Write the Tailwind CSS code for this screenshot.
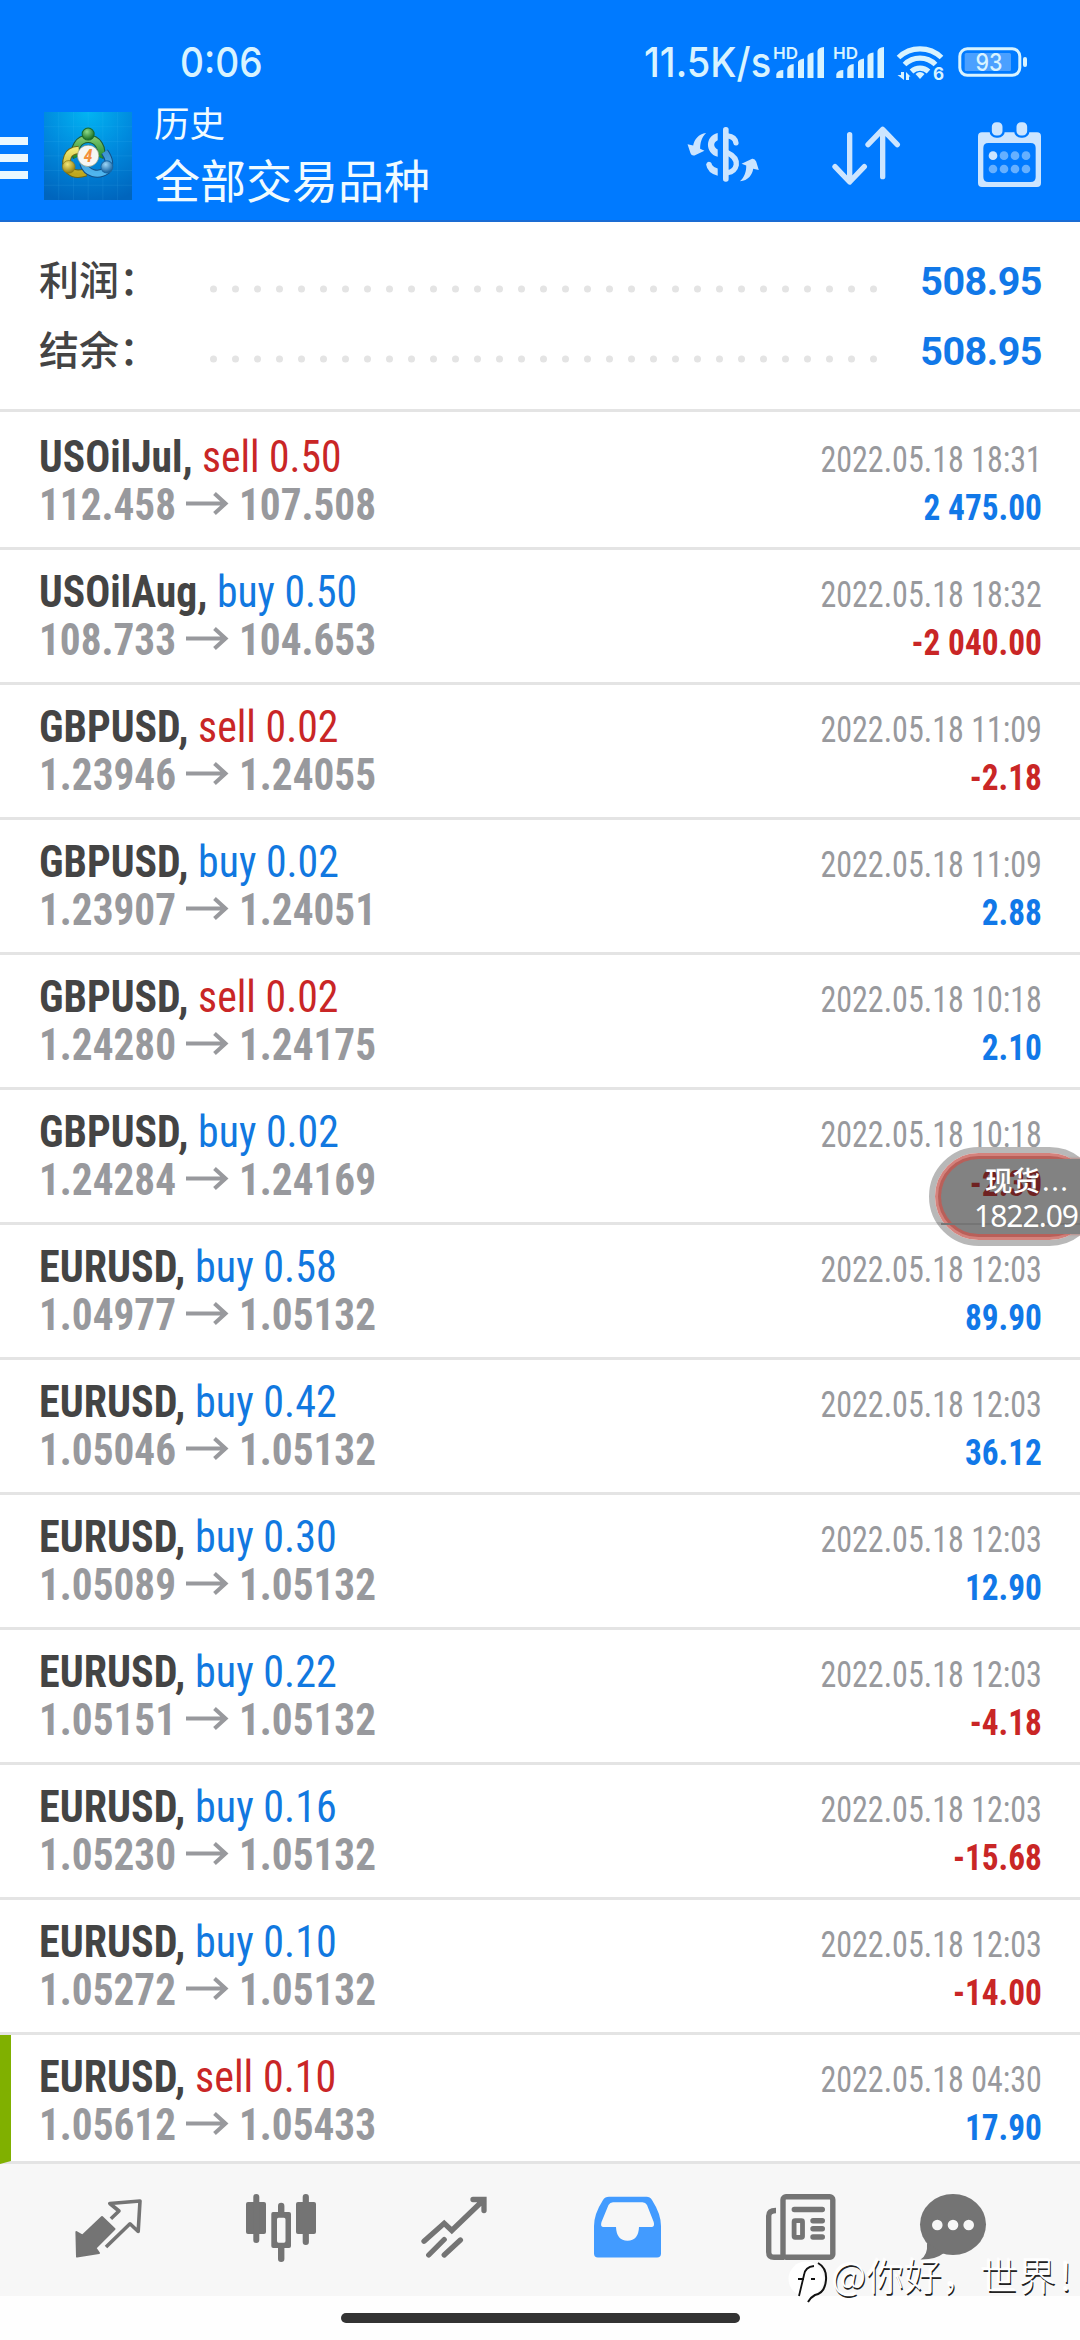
<!DOCTYPE html>
<html lang="zh-CN">
<head>
<meta charset="utf-8">
<title>历史</title>
<script src="https://cdn.jsdelivr.net/npm/@tailwindcss/browser@4"></script>
</head>
<body class="bg-white">
<div class="relative w-[1080px] h-[2340px] overflow-hidden flex flex-col bg-white font-['Roboto','Noto_Sans_CJK_SC',sans-serif]">

  <header class="h-[222px] shrink-0 bg-[#007aff] border-b-2 border-[#1a6cd4] flex flex-col">
    <div class="h-[100px] flex items-start font-['Inter',sans-serif] text-[41px] leading-[50px] font-medium text-[#d8f3ff]">
      <div class="w-[641px] pl-[180px] pt-[37px]"><span class="inline-block origin-left scale-x-[.905]">0:06</span></div>
      <div class="w-[129px] pt-[37px] pl-[3px] whitespace-nowrap"><span class="inline-block origin-left scale-x-[.93]">11.5K/s</span></div>
      <svg class="mt-[40px] w-[262px] h-[44px]" viewBox="770 40 262 44" fill="#d8f3ff">
        <g id="sig">
          <text x="773" y="58.5" font-size="16.5" font-weight="600" textLength="25" lengthAdjust="spacingAndGlyphs">HD</text>
          <path d="M776.3 78V74Q778 70 783.3 70V78ZM787.3 78V69Q788 64.500 793.700 64V78ZM798 78V62Q799 59 804 58.500V78ZM807.500 78V56Q808 53 813.500 52.500V78ZM817.500 78V51Q818 47.500 824 47V78Z"/>
        </g>
        <use href="#sig" x="60"/>
        <g fill="none" stroke="#d8f3ff" stroke-width="5.200">
          <path d="M898.500 57.500A31 31 0 0 1 941.500 57.500"/>
          <path d="M904.500 64.500A22 22 0 0 1 935.500 64.500"/>
          <path d="M911.500 71.500A12.500 12.500 0 0 1 928.500 71.500"/>
        </g>
        <path d="M915.500 74Q920 70 924.500 74L920 79Z"/>
        <path d="M901 72H904V80L897.500 75H901ZM906 80V72L910.500 76.500H909V80Z"/>
        <text x="933" y="80" font-size="17" font-weight="700">6</text>
        <rect x="959.800" y="48.800" width="60" height="26.500" rx="7.500" fill="none" stroke="#d8f3ff" stroke-width="3"/>
        <rect x="964.700" y="53" width="46.300" height="18" rx="1.500" fill="#4ba0ff"/>
        <rect x="1023" y="57" width="4" height="10" rx="2"/>
        <text x="975.500" y="71.300" font-size="24" font-weight="500" textLength="27" lengthAdjust="spacingAndGlyphs">93</text>
      </svg>
    </div>
    <div class="flex-1 flex items-start text-[#f0fbff]">
      <div class="w-[28px] pt-[37px] flex flex-col gap-[9px]">
        <i class="block h-[8px] bg-[#eaf8ff]"></i><i class="block h-[8px] bg-[#eaf8ff]"></i><i class="block h-[8px] bg-[#eaf8ff]"></i>
      </div>
      <svg class="ml-[16px] mt-[12px] w-[88px] h-[88px]" viewBox="43 37 263 263">
        <defs>
          <radialGradient id="bg" cx=".5" cy="0" r="1.050"><stop offset="0" stop-color="#02b4f2"/><stop offset=".5" stop-color="#0089dd"/><stop offset="1" stop-color="#0065bd"/></radialGradient>
          <linearGradient id="gr" x1="0" y1="0" x2="0" y2="1"><stop offset="0" stop-color="#7cc66c"/><stop offset="1" stop-color="#218a30"/></linearGradient>
          <linearGradient id="ye" x1="0" y1="0" x2="0" y2="1"><stop offset="0" stop-color="#efe874"/><stop offset="1" stop-color="#bfa71c"/></linearGradient>
          <linearGradient id="bl" x1="0" y1="0" x2="0" y2="1"><stop offset="0" stop-color="#3c92cf"/><stop offset="1" stop-color="#4fb5ee"/></linearGradient>
          <radialGradient id="gb" cx=".4" cy=".3" r=".7"><stop offset="0" stop-color="#8fdc8a"/><stop offset="1" stop-color="#136a1e"/></radialGradient>
          <radialGradient id="yb" cx=".4" cy=".3" r=".7"><stop offset="0" stop-color="#f3e878"/><stop offset="1" stop-color="#917b0c"/></radialGradient>
          <radialGradient id="bb" cx=".4" cy=".3" r=".7"><stop offset="0" stop-color="#9cd6f7"/><stop offset="1" stop-color="#115f9f"/></radialGradient>
        </defs>
        <rect x="43" y="37" width="263" height="263" fill="url(#bg)"/>
        <path d="M87 37V300M131 37V300M175 37V300M219 37V300M263 37V300M43 81H306M43 125H306M43 168H306M43 212H306M43 256H306" stroke="#5fd0ff" stroke-opacity=".16" stroke-width="2"/>
        <g fill="none">
          <path d="M141 172A38 38 0 1 1 209 172" stroke="#1f5c34" stroke-width="25"/>
          <path d="M141 172A38 38 0 1 1 209 172" stroke="url(#gr)" stroke-width="19"/>
          <path d="M168 217C125 232 100 205 114 170Q120 152 147 150" stroke="#6b6514" stroke-width="25"/>
          <path d="M168 217C125 232 100 205 114 170Q120 152 147 150" stroke="url(#ye)" stroke-width="19"/>
          <path d="M160 190C170 222 205 230 230 212Q248 190 224 156" stroke="#134f86" stroke-width="24"/>
          <path d="M160 190C170 222 205 230 230 212Q248 190 224 156" stroke="url(#bl)" stroke-width="18"/>
        </g>
        <circle cx="175" cy="103" r="18" fill="url(#gb)" stroke="#1a6a2b" stroke-width="3"/>
        <circle cx="117" cy="201" r="19" fill="url(#yb)" stroke="#8a7a16" stroke-width="2"/>
        <circle cx="231" cy="201" r="18" fill="url(#bb)" stroke="#1a68a5" stroke-width="3"/>
        <circle cx="175" cy="168" r="32" fill="#f6f6f4" stroke="#8a9478" stroke-width="2"/>
        <text x="175" y="187" text-anchor="middle" font-size="53" font-weight="700" font-style="italic" fill="#f4903c" font-family="Roboto Condensed">4</text>
      </svg>
      <div class="ml-[22px] w-[532px] -mt-[2px] whitespace-nowrap font-['Noto_Sans_CJK_SC',sans-serif]">
        <div class="h-[48px] text-[35.500px] leading-[48px]">历史</div>
        <div class="h-[60px] mt-[2px] text-[46px] leading-[60px]">全部交易品种</div>
      </div>
      <svg class="mt-[25px] w-[75px] h-[58px]" viewBox="75 315 225 175" fill="#cce5ff">
        <path d="M135 339C112 341 99 360 96 377L79 373L88 400Q91 409 100 407L130 393L117 387C117 370 121 352 135 339Z"/>
        <path d="M237 485C262 483 275 464 277 447L294 451L286 425Q282 416 274 417L242 432L256 437C257 454 251 472 237 485Z"/>
        <path d="M170 339C131 348 131 400 170 411V389C156 381 156 368 170 361Z"/>
        <path d="M143 426Q151 426 153 436Q157 443 170 446V468Q139 460 135 434Q137 427 143 426Z"/>
        <rect x="186" y="321" width="17" height="165" rx="8"/>
        <path d="M200 348Q222 350 225 369M198 398Q229 412 226 436Q222 456 200 459" fill="none" stroke="#cce5ff" stroke-width="16" stroke-linecap="round"/>
      </svg>
      <svg class="ml-[70px] mt-[25px] w-[71px] h-[62px]" viewBox="510 315 213 186" fill="none" stroke="#cce5ff" stroke-width="16" stroke-linecap="round" stroke-linejoin="round">
        <path d="M566 344V484M522 440L566 486L610 440M665 470V330M621 374L665 328L709 374"/>
      </svg>
      <svg class="ml-[74px] mt-[20px] w-[67px] h-[68px]" viewBox="945 300 201 204" fill="#cce5ff">
        <path fill-rule="evenodd" d="M963 337H1128Q1140 337 1140 349V489Q1140 501 1128 501H963Q951 501 951 489V349Q951 337 963 337ZM982 369Q967 369 967 384V471Q967 486 982 486H1109Q1124 486 1124 471V384Q1124 369 1109 369Z"/>
        <rect x="989" y="303" width="39" height="47" rx="17" stroke="#007aff" stroke-width="7"/>
        <rect x="1063" y="303" width="39" height="47" rx="17" stroke="#007aff" stroke-width="7"/>
        <circle cx="996" cy="407" r="13"/>
        <g fill="#66b0ff"><circle cx="1029" cy="407" r="13"/><circle cx="1062" cy="407" r="13"/><circle cx="1095" cy="407" r="13"/><circle cx="996" cy="447" r="13"/><circle cx="1029" cy="447" r="13"/><circle cx="1062" cy="447" r="13"/><circle cx="1095" cy="447" r="13"/></g>
      </svg>
    </div>
  </header>

  <section class="h-[190px] shrink-0 pt-[23px] border-b-[3px] border-[#e4e4e4] text-[40px] text-[#444]">
    <div class="h-[70px] flex items-center pl-[39px] pr-[38px]">
      <span class="w-[171px] h-[70px] -mt-[5px] font-['Noto_Sans_CJK_SC',sans-serif] font-medium leading-[70px]">利润：</span>
      <svg class="w-[668px] h-[8px] mt-[17px]" viewBox="0 0 668 8"><path d="M3.500 4H664" stroke="#e4e4e4" stroke-width="7" stroke-linecap="round" stroke-dasharray="0 22"/></svg>
      <span class="ml-auto mt-[3px] text-[39.500px] font-bold tracking-[-.5px] text-[#1178e8]">508.95</span>
    </div>
    <div class="h-[70px] flex items-center pl-[39px] pr-[38px]">
      <span class="w-[171px] h-[70px] -mt-[5px] font-['Noto_Sans_CJK_SC',sans-serif] font-medium leading-[70px]">结余：</span>
      <svg class="w-[668px] h-[8px] mt-[17px]" viewBox="0 0 668 8"><path d="M3.500 4H664" stroke="#e4e4e4" stroke-width="7" stroke-linecap="round" stroke-dasharray="0 22"/></svg>
      <span class="ml-auto mt-[3px] text-[39.500px] font-bold tracking-[-.5px] text-[#1178e8]">508.95</span>
    </div>
  </section>

  <main id="list" class="flex-1 pt-[3px] font-['Roboto_Condensed','Roboto',sans-serif]"></main>

  <nav class="h-[132px] shrink-0 bg-[#f7f7f7] pl-[21px] flex items-center text-[#747474]">
    <div class="w-[173px] flex justify-center"><svg class="w-[80px] h-[80px]" viewBox="68 2190 80 80" fill="currentColor" stroke="currentColor" stroke-linejoin="round">
      <path stroke-width="2" d="M76.400 2232L82.500 2235.500L102 2217L114.500 2229L95.500 2248L99 2253L77 2256.500Z"/>
      <path fill="none" stroke-width="3.600" d="M110.900 2218.700L119 2211L109.800 2203.500L140 2201L138.200 2231.500L130 2223.800L106 2247"/></svg></div>
    <div class="w-[173px] flex justify-center"><svg class="w-[80px] h-[80px]" viewBox="241 2190 80 80" fill="currentColor">
      <rect x="246" y="2202" width="20" height="32" rx="2"/><rect x="253.300" y="2194" width="6" height="49" rx="3"/>
      <path fill-rule="evenodd" d="M273 2212H289Q291 2212 291 2214V2246Q291 2248 289 2248H273.300Q271.300 2248 271.300 2246V2214Q271.300 2212 273 2212ZM278.500 2217.700Q277 2217.700 277 2219.500V2241Q277 2242.700 278.500 2242.700H284Q285.500 2242.700 285.500 2241V2219.500Q285.500 2217.700 284 2217.700Z"/>
      <path d="M278 2213V2206Q278 2202.700 281.200 2202.700T284.400 2206V2213ZM278 2247V2259Q278 2262 281.200 2262T284.400 2259V2247Z"/>
      <rect x="296" y="2202" width="20" height="32" rx="2"/><rect x="302.700" y="2194" width="6.200" height="51" rx="3"/></svg></div>
    <div class="w-[173px] flex justify-center"><svg class="w-[80px] h-[80px]" viewBox="414 2190 80 80" fill="none" stroke="currentColor" stroke-width="5.300" stroke-linecap="round">
      <path d="M424 2241.300L444.200 2223.300L451.800 2230.500L483 2200.500M473 2199.500H484V2210.500M428.700 2255L444.200 2239.500M444.200 2255L460.400 2240"/></svg></div>
    <div class="w-[173px] flex justify-center"><svg class="w-[80px] h-[80px]" viewBox="587 2190 80 80" fill="#429bff">
      <path fill-rule="evenodd" d="M609 2196.700H646.500Q650 2196.700 652 2200Q661 2214 661 2226V2253.500Q661 2257.500 657 2257.500H598Q594 2257.500 594 2253.500V2226Q594 2214 603 2200Q605 2196.700 609 2196.700ZM613 2202.300Q610 2202.300 608.500 2205L601.500 2222Q600 2227 603.500 2227H616Q616.500 2240.700 627.500 2240.700T639 2227H651.500Q655 2227 653.700 2222L647 2205Q645.500 2202.300 642.500 2202.300Z"/></svg></div>
    <div class="w-[173px] flex justify-center"><svg class="w-[80px] h-[80px]" viewBox="760 2190 80 80" fill="none" stroke="currentColor" stroke-width="5.400" stroke-linecap="round">
      <rect x="783" y="2196.700" width="49.800" height="60.600" rx="3"/>
      <path stroke-linecap="butt" d="M776 2210.500Q768.700 2210.500 768.700 2216V2252Q768.700 2257.300 774 2257.300H784"/>
      <path d="M794.300 2209.500H822.300M813 2220.700H822.300M813 2228.800H822.300M813 2237H822.300"/>
      <rect x="794.100" y="2220.700" width="8.400" height="16.600" rx="1" stroke-width="4.800"/></svg></div>
    <div class="w-[133px] flex justify-center"><svg class="w-[80px] h-[80px]" viewBox="913 2190 80 80" fill="currentColor">
      <ellipse cx="953" cy="2224.500" rx="33" ry="30.500"/><path d="M927 2243Q928 2255 920.500 2259.500Q935 2260 944 2253Z"/>
      <g fill="#f7f7f7"><circle cx="937.300" cy="2225" r="5.300"/><circle cx="953" cy="2225" r="5.300"/><circle cx="968.700" cy="2225" r="5.300"/></g></svg></div>
  </nav>
  <footer class="h-[44px] shrink-0 bg-[#fefefe] pt-[17px] flex justify-center"><i class="block w-[399px] h-[10px] rounded-full bg-[#333]"></i></footer>

  <!-- floating quote bubble -->
  <div class="absolute left-[929px] top-[1147px] w-[170px] h-[99px] rounded-full border-[6px] border-black/28">
    <div class="w-full h-full rounded-full border-[3px] border-[#d4827c] bg-[#b9605a]"></div>
  </div>
  <div class="absolute left-[941px] top-[1159px] w-[150px] h-[75px] rounded-l-full bg-[#828282] shadow-[0_0_3px_#b9605a]"></div>
  <div class="absolute left-[941px] top-[1223px] w-[139px] h-[2px] bg-[#757575]"></div>
  <div class="absolute right-[38px] top-[1160px] font-['Roboto_Condensed',sans-serif] font-bold text-[36px] leading-[48px] text-[#6f2222] origin-right scale-x-[.925]">-2.30</div>
  <div class="absolute left-[974px] top-[1160px] w-[130px] text-white whitespace-nowrap font-['Noto_Sans_CJK_SC',sans-serif]">
    <div class="pl-[11px] text-[27.500px] leading-[38px] flex"><span class="font-medium">现货</span><span class="ml-[2px] tracking-[1.500px]">...</span></div>
    <div class="font-['Noto_Sans',sans-serif] text-[30px] leading-[36px] tracking-[-1px]">1822.09</div>
  </div>

  <!-- watermark -->
  <div class="absolute left-[788px] top-[2250px] w-[292px] h-[58px] overflow-hidden flex items-start whitespace-nowrap text-white text-[37.500px] leading-[48px] tracking-[.5px] font-light font-['Noto_Sans_CJK_SC',sans-serif] [text-shadow:1px_1.500px_.5px_#222,-1px_-1px_1px_#fff]">
    <svg class="w-[44px] h-[54px] mt-[4px] shrink-0" viewBox="788 2254 44 54"><circle cx="806" cy="2279" r="17.500" fill="#fff"/><path d="M818 2263Q827 2268 826 2280Q825 2293 815 2295Q811 2297 808 2302" fill="none" stroke="#111" stroke-width="2"/><path d="M799 2296L804 2275Q805 2267 814 2266M798 2279H804M811 2279H815" fill="none" stroke="#111" stroke-width="1.800"/></svg>
    <span>@你好，世界！</span>
  </div>
</div>
<script>
const rows = [
  ["USOilJul","sell 0.50","112.458","107.508","18:31","2 475.00"],
  ["USOilAug","buy 0.50","108.733","104.653","18:32","-2 040.00"],
  ["GBPUSD","sell 0.02","1.23946","1.24055","11:09","-2.18"],
  ["GBPUSD","buy 0.02","1.23907","1.24051","11:09","2.88"],
  ["GBPUSD","sell 0.02","1.24280","1.24175","10:18","2.10"],
  ["GBPUSD","buy 0.02","1.24284","1.24169","10:18",""],
  ["EURUSD","buy 0.58","1.04977","1.05132","12:03","89.90"],
  ["EURUSD","buy 0.42","1.05046","1.05132","12:03","36.12"],
  ["EURUSD","buy 0.30","1.05089","1.05132","12:03","12.90"],
  ["EURUSD","buy 0.22","1.05151","1.05132","12:03","-4.18"],
  ["EURUSD","buy 0.16","1.05230","1.05132","12:03","-15.68"],
  ["EURUSD","buy 0.10","1.05272","1.05132","12:03","-14.00"],
  ["EURUSD","sell 0.10","1.05612","1.05433","04:30","17.90"]
];
const widths = { USOilJul: "scale-x-[.955]", USOilAug: "scale-x-[.956]", GBPUSD: "scale-x-[.961]", EURUSD: "scale-x-[.968]" };
document.getElementById("list").innerHTML = rows.map((r, i) => {
  const last = i === rows.length - 1;
  const side = r[1].startsWith("sell") ? "text-[#c92626]" : "text-[#1178e0]";
  const sum = r[5].startsWith("-") ? "text-[#c92626]" : "text-[#1178e8]";
  return `<div class="${last ? "h-[129px] border-l-[11px] border-l-[#80b000] pl-[28px]" : "h-[135px] pl-[39px]"} border-b-[3px] border-b-[#e4e4e4] pr-[38px] pt-[18px] flex justify-between whitespace-nowrap leading-[48px]">
    <div class="text-[43.500px] pt-[1px]">
      <div class="h-[48px] origin-left ${widths[r[0]]}"><b class="font-bold text-[#444]">${r[0]},</b> <span class="${side}">${r[1]}</span></div>
      <div class="h-[48px] flex text-[#98999d] font-bold">
        <span class="w-[147px]"><span class="inline-block origin-left scale-x-[.948]">${r[2]}</span></span>
        <svg class="w-[43px] h-[24px] mt-[9px]" viewBox="0 0 43 24" fill="none" stroke="#98999d" stroke-width="4"><path d="M0 12.500H40M28.500 2.500L39.500 12.500L28.500 22.500"/></svg>
        <span class="ml-[10px] inline-block origin-left scale-x-[.948]">${r[3]}</span>
      </div>
    </div>
    <div class="pt-[3px] text-[36px] text-right">
      <div class="h-[48px] origin-right scale-x-[.89] text-[#98999d]">2022.05.18 ${r[4]}</div>
      <div class="h-[48px] origin-right scale-x-[.925] font-bold ${sum}">${r[5]}</div>
    </div>
  </div>`;
}).join("");
</script>
</body>
</html>
